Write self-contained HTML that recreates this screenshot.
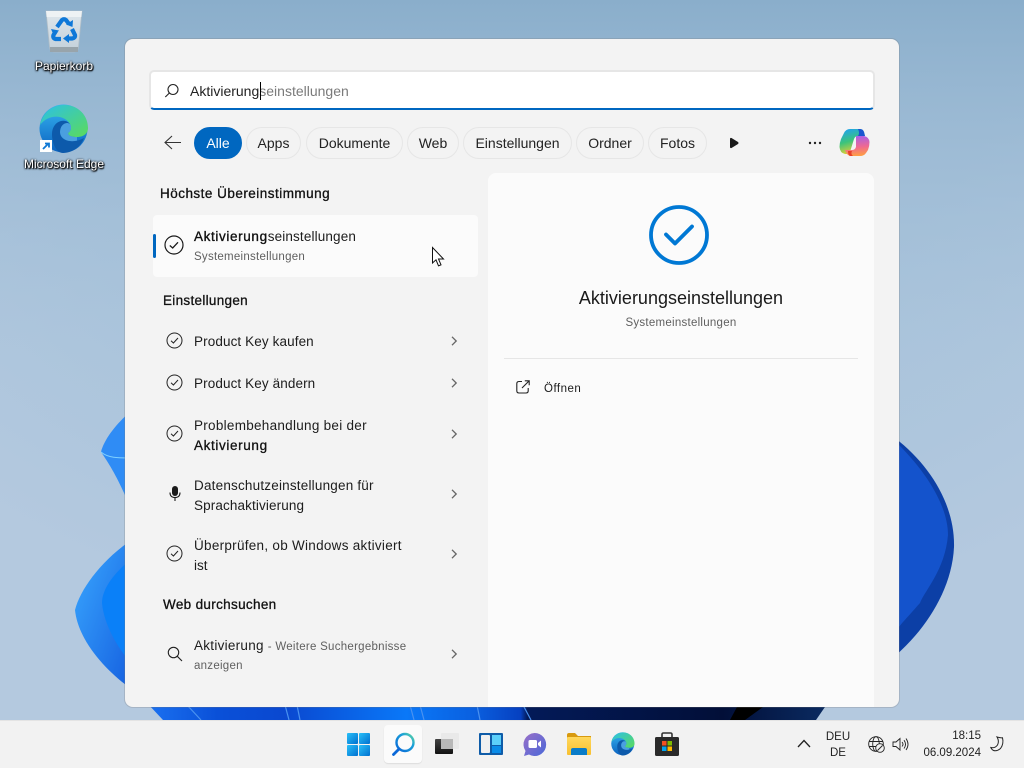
<!DOCTYPE html>
<html lang="de"><head><meta charset="utf-8"><title>Suche</title>
<style>
html,body{margin:0;padding:0;width:1024px;height:768px;overflow:hidden}
body{position:relative;font-family:"Liberation Sans",sans-serif;color:#1b1b1b;background:#a6c1d9}
.a{position:absolute;white-space:nowrap}
.t{position:absolute;white-space:nowrap;font-size:13.5px;line-height:20px;color:#1c1c1c}
.h{position:absolute;white-space:nowrap;font-size:13.5px;line-height:20px;color:#111;-webkit-text-stroke:.3px #111}
.s{position:absolute;white-space:nowrap;font-size:11.5px;line-height:20px;color:#5f5f5f;letter-spacing:.26px}
.chip{position:absolute;top:127px;height:32px;box-sizing:border-box;border:1px solid #e6e6e6;border-radius:16px;font-size:14px;line-height:30px;text-align:center;color:#222;background:#f3f3f3}
svg{position:absolute;overflow:visible}
.desk{position:absolute;color:#fff;font-size:12px;line-height:16px;text-align:center;white-space:nowrap;text-shadow:0 0 2px #000,0 1px 2px #000,1px 1px 1px #000}
</style></head><body>

<!-- wallpaper -->
<svg style="left:0;top:0" width="1024" height="768" viewBox="0 0 1024 768">
<defs>
<radialGradient id="bg" cx="52%" cy="0%" r="85%"><stop offset="0" stop-color="#a3c4de"/><stop offset=".55" stop-color="#a6c2da"/><stop offset="1" stop-color="#b4c9df"/></radialGradient>
<linearGradient id="bg2" x1="0" y1="0" x2="0" y2="1"><stop offset="0" stop-color="#8aaecb"/><stop offset="1" stop-color="#b4c9df" stop-opacity="0"/></linearGradient>
<linearGradient id="bl" x1="0" y1="0" x2="1" y2="1"><stop offset="0" stop-color="#3aa8ff"/><stop offset="1" stop-color="#1560e0"/></linearGradient>
<linearGradient id="st" x1="150" y1="0" x2="824" y2="0" gradientUnits="userSpaceOnUse"><stop offset="0" stop-color="#1a70f0"/><stop offset=".1" stop-color="#0a50d8"/><stop offset=".2" stop-color="#0a48d0"/><stop offset=".38" stop-color="#0a78f8"/><stop offset=".48" stop-color="#0a60e0"/><stop offset=".55" stop-color="#0640c0"/><stop offset=".56" stop-color="#031a58"/><stop offset=".85" stop-color="#020f38"/><stop offset="1" stop-color="#0a2a60"/></linearGradient>
</defs>
<rect width="1024" height="768" fill="url(#bg)"/>
<rect width="1024" height="420" fill="url(#bg2)"/>
<path d="M130 412 C115 425 104 440 101 452 C108 462 116 475 125 495 L130 495Z" fill="#2f8cf5"/>
<path d="M101 452 C108 458 118 458 130 458" fill="none" stroke="#7fd0ff" stroke-width="1"/>
<path d="M130 541 C100 562 80 590 75 610 C78 640 105 670 130 688Z" fill="url(#bl)"/>
<path d="M130 560 C112 575 102 590 102 603 C104 625 118 648 130 662Z" fill="#0a80f8"/>
<path d="M895 438 C930 465 955 505 954 547 C952 590 925 630 895 656Z" fill="#0c3fa6"/>
<path d="M895 441 C925 470 948 505 948 535 C945 570 925 590 920 603 C905 620 900 625 895 632Z" fill="#1453cc"/>
<path d="M148 704 H827 L816 720 H163 Z" fill="url(#st)"/>
<path d="M187 705 l14 15 M285 705 l4 15 M297 705 l3 15 M410 705 l4 15 M420 705 l4 15 M477 705 l3 15 M523 705 l8 15" stroke="#4a92f0" stroke-width="1.200" fill="none"/>
<path d="M737 707 H763 L745 720 H730Z" fill="#000"/>
</svg>

<!-- desktop icons -->
<svg style="left:44px;top:9px" width="40" height="44" viewBox="0 0 40 44">
<defs><linearGradient id="bn" x1="0" y1="0" x2="0" y2="1"><stop offset="0" stop-color="#dfe7ec"/><stop offset="1" stop-color="#c3d0da"/></linearGradient></defs>
<path d="M2 2 H38 L34.500 38 Q34 43 30 43 H10 Q6 43 5.500 38Z" fill="url(#bn)" stroke="#aebcc6" stroke-width=".8"/>
<path d="M2 2 H38 L37.300 8 H2.700Z" fill="#eef2f4"/>
<rect x="6" y="38" width="28" height="5" fill="#98a4ab"/>
<g fill="none" stroke="#0f78d8" stroke-width="4.200"><path d="M13 18 L18 11 Q20 9.500 22 11 L25 15"/><path d="M28 20 L31 26 Q31.500 29 28 29.500 L23 29.500"/><path d="M17 30 H11.500 Q8.500 29 9.500 26 L12 22"/></g>
<g fill="#0f78d8"><path d="M29 11 L28.500 18 L22 15.500Z"/><path d="M25 25 V34 L19 29.500Z"/><path d="M7 20 L15 21.500 L10 27Z"/></g>
</svg>
<div class="desk" style="left:14px;top:58px;width:100px">Papierkorb</div>

<svg style="left:39px;top:104px" width="50" height="50" viewBox="0 0 50 50">
<defs>
<linearGradient id="e1" x1="0" y1="0" x2="1" y2="1"><stop offset="0" stop-color="#2bc0e8"/><stop offset="1" stop-color="#5bdb5a"/></linearGradient>
<linearGradient id="e2" x1="0" y1="0" x2="0" y2="1"><stop offset="0" stop-color="#36b4f0"/><stop offset="1" stop-color="#0b62c0"/></linearGradient>
</defs>
<circle cx="24.500" cy="24.500" r="24" fill="url(#e2)"/>
<path d="M1 21 C4 7 15 1 25 1 C40 1 49 12 49 24 C49 30 44 33 38 33 C33 33 29 32 29 29 C32 27 33 24 31 20 C26 11 10 9 1 21Z" fill="url(#e1)"/>
<path d="M21 28 C21 21 26 17 31 20 C33 24 32 27 29 29 C29 32 33 33 38 33 L38 37 C30 39 21 35 21 28Z" fill="#4a9fe0"/>
<path d="M13 30 C13 18 25 13 31 20 C27 17 21 21 21 28 C21 35 28 38 36 37 C40 36.500 43 35 45 34 C42 42 34 49 24 49 C17 49 13 39 13 30Z" fill="#0d5aab"/>
<rect x="1" y="36" width="12" height="12" fill="#fff"/>
<path d="M4 45 L9 40 M6 39.500 H10 V43.500" stroke="#1079d5" stroke-width="1.800" fill="none"/>
</svg>
<div class="desk" style="left:14px;top:156px;width:100px">Microsoft Edge</div>

<!-- window -->
<div class="a" style="left:125px;top:39px;width:774px;height:668px;background:#f3f3f3;border-radius:8px;box-shadow:0 0 0 1px rgba(120,120,120,.25)"></div>

<!-- search box -->
<div class="a" style="left:149px;top:70px;width:726px;height:40px;box-sizing:border-box;background:#fff;border:2px solid #e6e6e6;border-bottom:2px solid #0067c0;border-radius:5px"></div>
<svg style="left:164px;top:83px" width="16" height="16" viewBox="0 0 16 16" fill="none" stroke="#222" stroke-width="1.100"><circle cx="9" cy="6.500" r="5"/><path d="M5.400 10 L1.300 14"/></svg>
<div class="t" style="left:190px;top:81px;font-size:14px;color:#222">Aktivierung<span style="color:#7a7a7a">seinstellungen</span></div>
<div class="a" style="left:260px;top:82px;width:1px;height:18px;background:#000"></div>

<!-- chips -->
<svg style="left:164px;top:134px" width="18" height="18" viewBox="0 0 18 18" fill="none" stroke="#333" stroke-width="1.100"><path d="M17 8.500 H1 M8 2 L1 8.500 L8 15"/></svg>
<div class="chip" style="left:194px;width:48px;background:#0067c0;border-color:#0067c0;color:#fff">Alle</div>
<div class="chip" style="left:246px;width:55px">Apps</div>
<div class="chip" style="left:306px;width:97px">Dokumente</div>
<div class="chip" style="left:407px;width:52px">Web</div>
<div class="chip" style="left:463px;width:109px">Einstellungen</div>
<div class="chip" style="left:576px;width:68px">Ordner</div>
<div class="chip" style="left:648px;width:59px">Fotos</div>
<svg style="left:729px;top:137px" width="10" height="12" viewBox="0 0 10 12"><path d="M1 2 Q1 .5 2.500 1 L9 5 Q10 6 9 7 L2.500 11 Q1 11.500 1 10Z" fill="#1a1a1a"/></svg>
<svg style="left:808px;top:141px" width="14" height="4"><circle cx="2" cy="2" r="1.200" fill="#222"/><circle cx="7" cy="2" r="1.200" fill="#222"/><circle cx="12" cy="2" r="1.200" fill="#222"/></svg>
<!-- copilot -->
<svg style="left:839px;top:128px" width="31" height="29" viewBox="0 0 31 29">
<defs>
<linearGradient id="c1" x1=".2" y1="0" x2=".5" y2="1"><stop offset="0" stop-color="#1fa2f0"/><stop offset=".5" stop-color="#3cc47a"/><stop offset="1" stop-color="#f0d030"/></linearGradient>
<linearGradient id="c2" x1=".5" y1="0" x2=".6" y2="1"><stop offset="0" stop-color="#a860e8"/><stop offset=".55" stop-color="#f06a90"/><stop offset="1" stop-color="#ffa040"/></linearGradient>
</defs>
<path d="M11 1 H21 Q24 1 25 4 L26 8 H19 Q16 8 15 11 L11 24 Q10 26 8 26 H6 Q1 25 .5 19 Q.5 15 2 11 L5 5 Q7 1 11 1Z" fill="url(#c1)"/>
<path d="M17 8 H25 Q30 9 30.500 14 Q30.500 18 29 22 L27 25 Q25 28 21 28 H11 Q8 27 7 24 L6 22 H13 Q16 22 17 19Z" fill="url(#c2)"/>
<path d="M19 1 H21 Q24 1 25 4 L26 8 H19 Q21 5 19 1Z" fill="#1a55d0"/>
<path d="M9 23 H13 Q11.500 26 14 28 H11 Q9 27 9 23Z" fill="#e8402a"/>
</svg>

<!-- left column -->
<div class="h" style="left:160px;top:184px;letter-spacing:.48px">Höchste Übereinstimmung</div>
<div class="a" style="left:153px;top:215px;width:325px;height:62px;background:#fbfbfb;border-radius:4px"></div>
<div class="a" style="left:153px;top:234px;width:3px;height:24px;background:#0067c0;border-radius:2px"></div>
<svg style="left:164px;top:235px" width="20" height="20" viewBox="0 0 20 20" fill="none" stroke="#1a1a1a" stroke-width="1.200"><circle cx="10" cy="10" r="9"/><path d="M5.800 10.500 L8.700 13 L14 7.300" stroke-width="1.300"/></svg>
<div class="t" style="left:194px;top:227px;letter-spacing:.14px"><span style="-webkit-text-stroke:.35px #111;color:#111;letter-spacing:.63px">Aktivierung</span>seinstellungen</div>
<div class="s" style="left:194px;top:247px">Systemeinstellungen</div>
<!-- cursor -->
<svg style="left:432px;top:247px" width="13" height="20" viewBox="0 0 13 20"><path d="M.5 .5 V16 L4 12.800 L6.500 18.800 L9 17.800 L6.500 12 H11.500Z" fill="#fff" stroke="#111" stroke-width="1"/></svg>

<div class="h" style="left:163px;top:291px;letter-spacing:.3px">Einstellungen</div>

<svg style="left:166px;top:332px" width="17" height="17" viewBox="0 0 17 17" fill="none" stroke="#222" stroke-width="1"><circle cx="8.500" cy="8.500" r="7.500"/><path d="M5 8.800 L7.400 11 L12 6"/></svg>
<div class="t" style="left:194px;top:332px;letter-spacing:.11px">Product Key kaufen</div>
<svg style="left:451px;top:336px" width="7" height="10" viewBox="0 0 7 10" fill="none" stroke="#666" stroke-width="1.300"><path d="M1 .8 L5.200 5 L1 9.200"/></svg>

<svg style="left:166px;top:374px" width="17" height="17" viewBox="0 0 17 17" fill="none" stroke="#222" stroke-width="1"><circle cx="8.500" cy="8.500" r="7.500"/><path d="M5 8.800 L7.400 11 L12 6"/></svg>
<div class="t" style="left:194px;top:374px;letter-spacing:.11px">Product Key ändern</div>
<svg style="left:451px;top:378px" width="7" height="10" viewBox="0 0 7 10" fill="none" stroke="#666" stroke-width="1.300"><path d="M1 .8 L5.200 5 L1 9.200"/></svg>

<svg style="left:166px;top:425px" width="17" height="17" viewBox="0 0 17 17" fill="none" stroke="#222" stroke-width="1"><circle cx="8.500" cy="8.500" r="7.500"/><path d="M5 8.800 L7.400 11 L12 6"/></svg>
<div class="t" style="left:194px;top:416px;letter-spacing:.28px">Problembehandlung bei der</div>
<div class="h" style="left:194px;top:436px;letter-spacing:.63px">Aktivierung</div>
<svg style="left:451px;top:429px" width="7" height="10" viewBox="0 0 7 10" fill="none" stroke="#666" stroke-width="1.300"><path d="M1 .8 L5.200 5 L1 9.200"/></svg>

<svg style="left:169px;top:486px" width="12" height="16" viewBox="0 0 12 16"><rect x="3" y="0" width="6" height="10" rx="3" fill="#1a1a1a"/><path d="M1 6.500 Q1 11.500 6 11.500 Q11 11.500 11 6.500 M6 11.500 V15" stroke="#1a1a1a" stroke-width="1.100" fill="none"/></svg>
<div class="t" style="left:194px;top:476px;letter-spacing:.2px">Datenschutzeinstellungen für</div>
<div class="t" style="left:194px;top:496px;letter-spacing:.12px">Sprachaktivierung</div>
<svg style="left:451px;top:489px" width="7" height="10" viewBox="0 0 7 10" fill="none" stroke="#666" stroke-width="1.300"><path d="M1 .8 L5.200 5 L1 9.200"/></svg>

<svg style="left:166px;top:545px" width="17" height="17" viewBox="0 0 17 17" fill="none" stroke="#222" stroke-width="1"><circle cx="8.500" cy="8.500" r="7.500"/><path d="M5 8.800 L7.400 11 L12 6"/></svg>
<div class="t" style="left:194px;top:536px;letter-spacing:.28px">Überprüfen, ob Windows aktiviert</div>
<div class="t" style="left:194px;top:556px">ist</div>
<svg style="left:451px;top:549px" width="7" height="10" viewBox="0 0 7 10" fill="none" stroke="#666" stroke-width="1.300"><path d="M1 .8 L5.200 5 L1 9.200"/></svg>

<div class="h" style="left:163px;top:595px;letter-spacing:.33px">Web durchsuchen</div>

<svg style="left:167px;top:646px" width="16" height="16" viewBox="0 0 16 16" fill="none" stroke="#222" stroke-width="1.100"><circle cx="6.500" cy="6.500" r="5.200"/><path d="M10.300 10.300 L15 15"/></svg>
<div class="t" style="left:194px;top:636px;letter-spacing:.27px">Aktivierung <span style="font-size:11.500px;color:#5f5f5f">- Weitere Suchergebnisse</span></div>
<div class="s" style="left:194px;top:656px">anzeigen</div>
<svg style="left:451px;top:649px" width="7" height="10" viewBox="0 0 7 10" fill="none" stroke="#666" stroke-width="1.300"><path d="M1 .8 L5.200 5 L1 9.200"/></svg>

<!-- right panel -->
<div class="a" style="left:488px;top:173px;width:386px;height:534px;background:#fbfbfb;border-radius:8px 8px 0 0"></div>
<svg style="left:649px;top:205px" width="60" height="60" viewBox="0 0 60 60" fill="none" stroke="#0078d4"><circle cx="30" cy="30" r="28" stroke-width="3.800"/><path d="M17 29.500 L26 38.500 L43 21.500" stroke-width="3.800" stroke-linecap="round" stroke-linejoin="round"/></svg>
<div class="a" style="left:488px;top:287px;width:386px;text-align:center;font-size:18px;line-height:22px;color:#1a1a1a">Aktivierungseinstellungen</div>
<div class="a" style="left:488px;top:313px;width:386px;text-align:center;font-size:11.500px;line-height:20px;color:#5f5f5f;letter-spacing:.26px">Systemeinstellungen</div>
<div class="a" style="left:504px;top:358px;width:354px;height:1px;background:#e6e6e6"></div>
<svg style="left:516px;top:380px" width="14" height="14" viewBox="0 0 14 14" fill="none" stroke="#222" stroke-width="1.100"><path d="M6 1.500 H3 Q.8 1.500 .8 3.700 V10.800 Q.8 13 3 13 H10 Q12.200 13 12.200 10.800 V8"/><path d="M6 8 L13 1 M8.800 .8 H13.200 V5.200"/></svg>
<div class="a" style="left:544px;top:379px;font-size:11.500px;line-height:20px;color:#1a1a1a;letter-spacing:.5px">Öffnen</div>

<!-- taskbar -->
<div class="a" style="left:0;top:720px;width:1024px;height:48px;background:#f2f2f2;border-top:1px solid #e4e4e4;box-sizing:border-box"></div>
<svg style="left:347px;top:733px" width="23" height="23" viewBox="0 0 23 23">
<defs><linearGradient id="w" x1="0" y1="0" x2="1" y2="1"><stop offset="0" stop-color="#29c0f8"/><stop offset="1" stop-color="#0070d0"/></linearGradient></defs>
<rect x="0" y="0" width="11" height="11" rx="1" fill="url(#w)"/><rect x="12" y="0" width="11" height="11" rx="1" fill="url(#w)"/><rect x="0" y="12" width="11" height="11" rx="1" fill="url(#w)"/><rect x="12" y="12" width="11" height="11" rx="1" fill="url(#w)"/></svg>
<div class="a" style="left:384px;top:725px;width:38px;height:38px;background:#fbfbfb;border-radius:4px;box-shadow:0 1px 1px #ddd"></div>
<svg style="left:392px;top:732px" width="24" height="25" viewBox="0 0 24 25" fill="none">
<defs><linearGradient id="sg" x1="0" y1="1" x2="1" y2="0"><stop offset="0" stop-color="#0a68d8"/><stop offset=".65" stop-color="#1aa0d8"/><stop offset="1" stop-color="#60d8a0"/></linearGradient></defs>
<circle cx="13" cy="10.500" r="8.500" stroke="url(#sg)" stroke-width="2.400"/><path d="M7 17 L1.500 22.500" stroke="#0a68d8" stroke-width="2.800" stroke-linecap="round"/></svg>
<svg style="left:435px;top:733px" width="24" height="23" viewBox="0 0 24 23">
<defs><linearGradient id="tv" x1="0" y1="0" x2="0" y2="1"><stop offset="0" stop-color="#444"/><stop offset="1" stop-color="#111"/></linearGradient></defs>
<rect x="0" y="6" width="18" height="15" rx="1" fill="url(#tv)"/><rect x="6" y="0" width="18" height="16" rx="1" fill="#e8e8e8" opacity=".95"/><rect x="6" y="6" width="12" height="10" fill="#b8b8b8"/></svg>
<svg style="left:479px;top:733px" width="24" height="22" viewBox="0 0 24 22"><rect width="24" height="22" rx="1" fill="#0f5ca8"/><rect x="2" y="2" width="9" height="18" rx="1" fill="#f0f0f0"/><rect x="13" y="2" width="9" height="10" fill="#5cd0fa"/><rect x="13" y="13" width="9" height="7" fill="#0a8ce8"/></svg>
<svg style="left:523px;top:733px" width="23" height="23" viewBox="0 0 23 23">
<defs><linearGradient id="ch" x1="0" y1="0" x2="1" y2="1"><stop offset="0" stop-color="#9a70c8"/><stop offset="1" stop-color="#4a68d8"/></linearGradient></defs>
<path d="M11.500 0 A11.500 11.500 0 1 1 6 21.500 L1 23 L2.500 18 A11.500 11.500 0 0 1 11.500 0Z" fill="url(#ch)"/><rect x="5.500" y="7" width="8.500" height="8" rx="1.500" fill="#fff"/><path d="M15 10 L18 7.500 V14.500 L15 12Z" fill="#fff"/></svg>
<svg style="left:567px;top:733px" width="24" height="22" viewBox="0 0 24 22">
<defs><linearGradient id="fo" x1="0" y1="0" x2="0" y2="1"><stop offset="0" stop-color="#ffd85c"/><stop offset="1" stop-color="#f8c030"/></linearGradient></defs>
<path d="M0 2 Q0 0 2 0 H8 L11 3 H24 V7 H0Z" fill="#d89a10"/><rect y="4" width="24" height="18" rx="1" fill="url(#fo)"/><path d="M4 22 V17 Q4 15 6 15 H18 Q20 15 20 17 V22Z" fill="#0a7cc8"/></svg>
<svg style="left:611px;top:732px" width="24" height="24" viewBox="0 0 50 50">
<circle cx="24.500" cy="24.500" r="24" fill="url(#e2)"/>
<path d="M1 21 C4 7 15 1 25 1 C40 1 49 12 49 24 C49 30 44 33 38 33 C33 33 29 32 29 29 C32 27 33 24 31 20 C26 11 10 9 1 21Z" fill="url(#e1)"/>
<path d="M21 28 C21 21 26 17 31 20 C33 24 32 27 29 29 C29 32 33 33 38 33 L38 37 C30 39 21 35 21 28Z" fill="#4a9fe0"/>
<path d="M13 30 C13 18 25 13 31 20 C27 17 21 21 21 28 C21 35 28 38 36 37 C40 36.500 43 35 45 34 C42 42 34 49 24 49 C17 49 13 39 13 30Z" fill="#0d5aab"/></svg>
<svg style="left:655px;top:732px" width="24" height="24" viewBox="0 0 24 24"><path d="M7 6 V2.500 Q7 1 8.500 1 H15.500 Q17 1 17 2.500 V6" fill="none" stroke="#333" stroke-width="1.600"/><rect y="5" width="24" height="19" rx="1.500" fill="#2a2a2a"/><rect x="7" y="9" width="4.500" height="4.500" fill="#f25022"/><rect x="12.500" y="9" width="4.500" height="4.500" fill="#7fba00"/><rect x="7" y="14.500" width="4.500" height="4.500" fill="#00a4ef"/><rect x="12.500" y="14.500" width="4.500" height="4.500" fill="#ffb900"/></svg>

<!-- tray -->
<svg style="left:797px;top:739px" width="14" height="9" viewBox="0 0 14 9" fill="none" stroke="#222" stroke-width="1.300"><path d="M1 8 L7 1.500 L13 8"/></svg>
<div class="a" style="left:818px;top:729px;width:40px;text-align:center;font-size:11.500px;line-height:16px;color:#222">DEU<br>DE</div>
<svg style="left:868px;top:736px" width="17" height="17" viewBox="0 0 17 17" fill="none" stroke="#222" stroke-width=".9"><circle cx="8" cy="8" r="7.300"/><ellipse cx="8" cy="8" rx="3.300" ry="7.300"/><path d="M1 5.500 H15 M1 10.500 H10"/><circle cx="12" cy="12" r="4.300" fill="#f2f2f2"/><path d="M9.500 14.500 L14.500 9.500"/></svg>
<svg style="left:892px;top:737px" width="17" height="15" viewBox="0 0 17 15" fill="none" stroke="#222" stroke-width=".9"><path d="M1 5 H4 L8 1.500 V13 L4 9.500 H1Z"/><path d="M10 5 Q12 7.300 10 9.500 M12 3.200 Q15 7.300 12 11.500 M14 1.500 Q18 7.300 14 13"/></svg>
<div class="a" style="left:920px;top:728px;width:61px;text-align:right;font-size:11.500px;line-height:17px;color:#222">18:15<br>06.09.2024</div>
<svg style="left:990px;top:736px" width="14" height="16" viewBox="0 0 14 16" fill="none" stroke="#222" stroke-width="1"><path d="M7 1 Q10.500 2 12.500 1.800 Q14 8 10.500 12.500 Q7 15.500 3.500 14.500 Q1.500 13.500 .8 11.500 Q5 12.500 7.500 9 Q9.500 5 7 1Z"/></svg>
</body></html>
